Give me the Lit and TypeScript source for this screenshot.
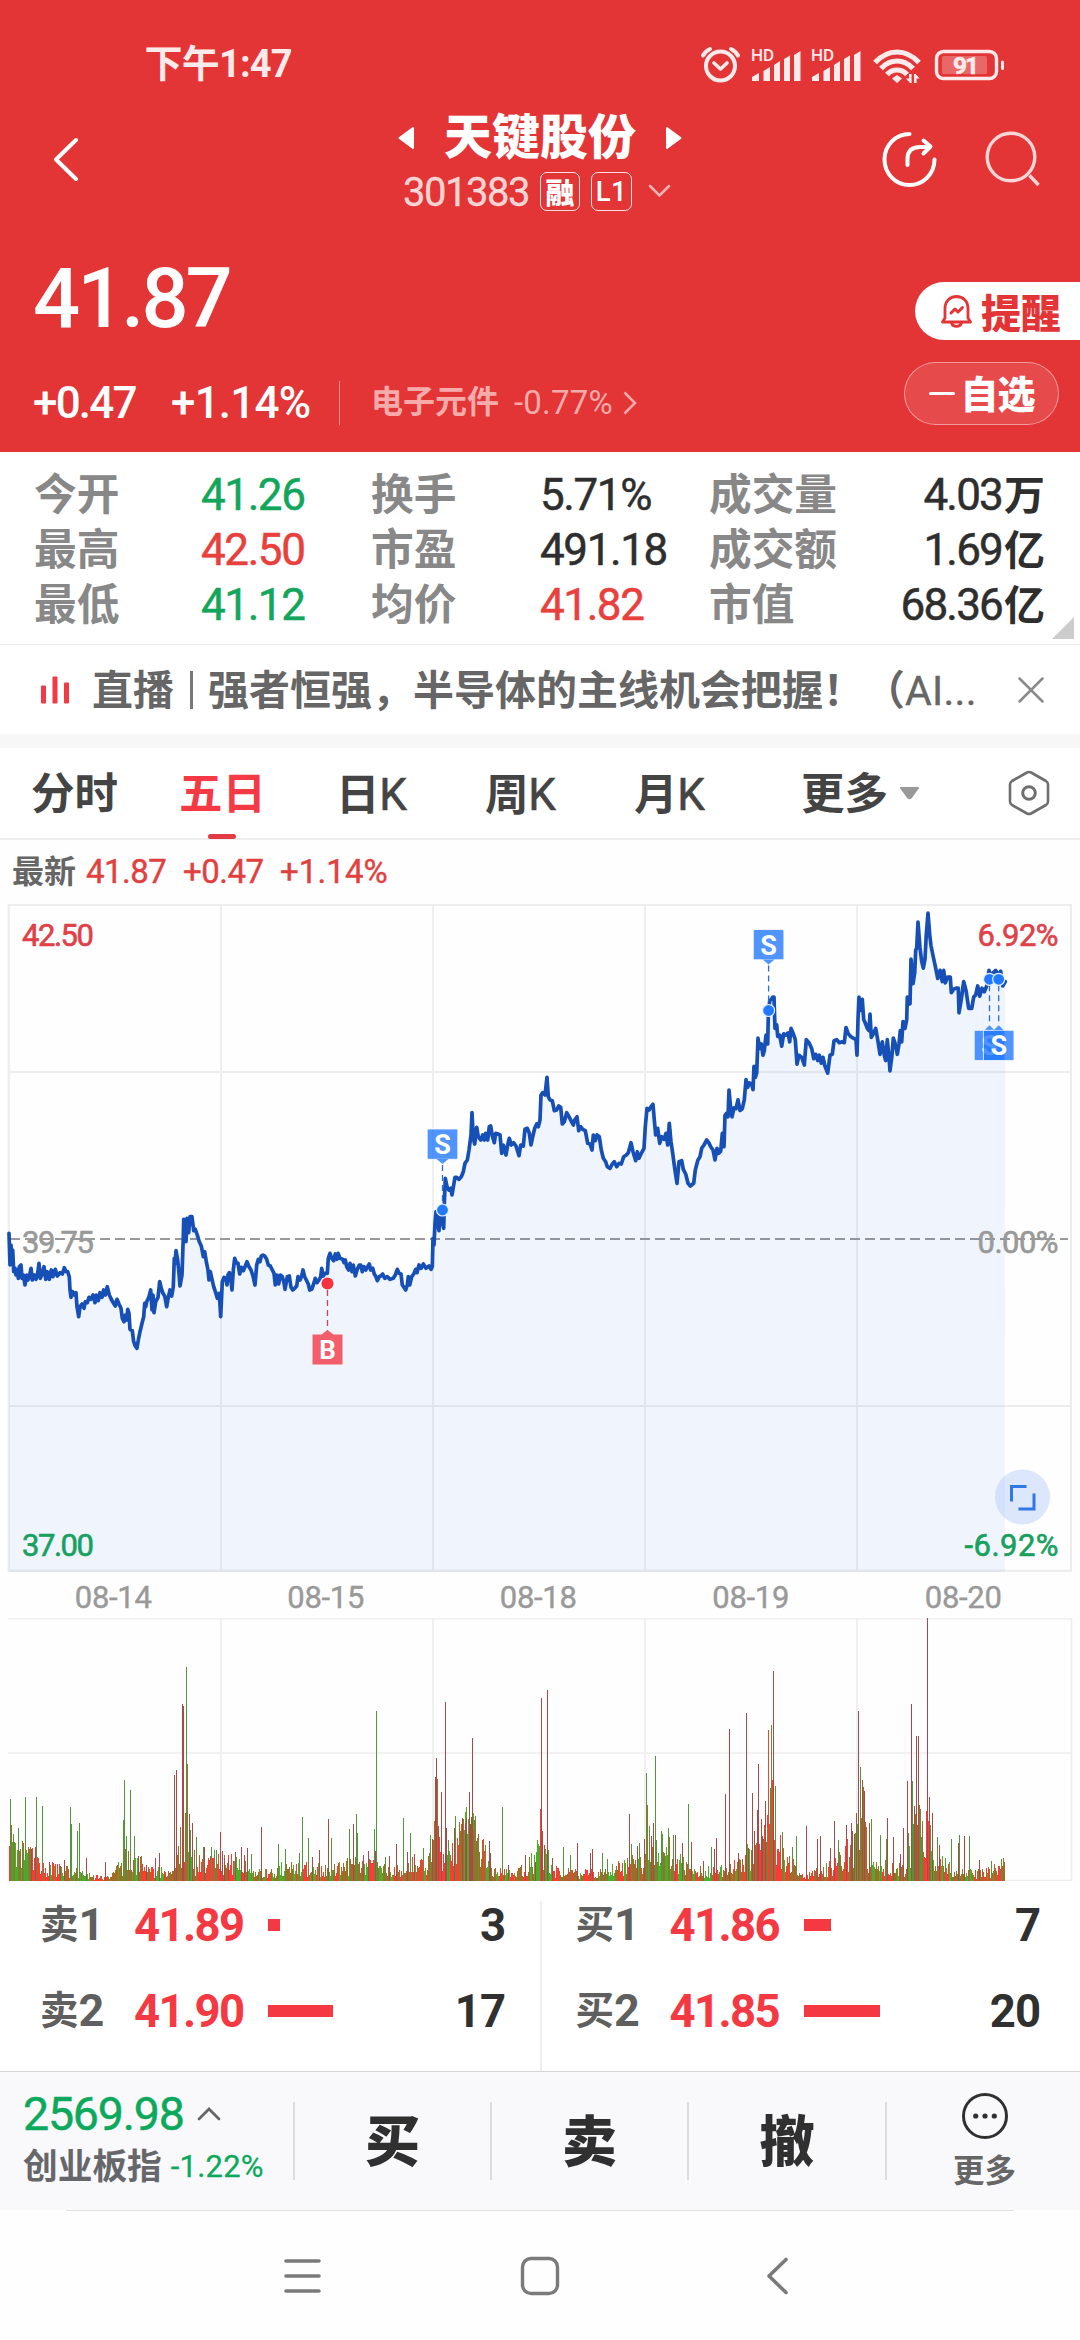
import { LitElement, html, svg, css } from "lit";
import { customElement, property } from "lit/decorators.js";

const base = css`
  :host {
    display: block;
    font-family: Roboto, "Noto Sans CJK SC", sans-serif;
    box-sizing: border-box;
  }
  * { box-sizing: border-box; }
  svg { display: block; flex: none; }
  .cjk { font-weight: 700; }
`;

/* ---------- chart data ---------- */

type Pt = [number, number];

const seg1 = "27,1030 30,1125 33,1065 36,1120 38,1080 41,1145 45,1135 48,1155 52,1140 55,1165 58,1130 63,1125 66,1165 70,1155 75,1185 80,1155 84,1170 89,1155 93,1135 97,1170 103,1155 108,1168 113,1150 117,1120 121,1165 127,1150 132,1130 137,1168 142,1145 148,1168 154,1140 159,1160 166,1138 172,1158 180,1148 187,1152 193,1133 198,1145 203,1145 208,1160 210,1200 213,1222 218,1205 223,1215 228,1208 231,1250 236,1280 240,1250 246,1242 252,1255 256,1235 262,1238 267,1222 272,1228 279,1215 285,1238 289,1215 295,1232 300,1208 306,1222 311,1200 316,1215 322,1190 328,1215 334,1228 340,1238 346,1248 351,1228 357,1242 363,1255 367,1285 372,1295 376,1275 380,1290 383,1258 387,1270 390,1318 397,1322 401,1355 406,1368 411,1375 415,1350 420,1325 426,1300 431,1280 434,1240 437,1250 440,1235 447,1220 452,1200 456,1260 459,1215 462,1268 467,1235 474,1222 479,1175 484,1195 489,1210 494,1218 500,1250 505,1222 510,1200 515,1218 520,1190 523,1105 525,1120 528,1082 533,1110 537,1150 540,1188 546,1155 550,1040 551,988 555,1000 558,1055 561,985 566,1028 570,980 576,980 581,1022 586,1018 592,1035 598,1055 604,1068 610,1100 614,1085 619,1115 624,1140 627,1170 631,1145 636,1168 641,1190 647,1208 652,1225 658,1210 662,1280 667,1175 672,1162 677,1165 681,1185 684,1155 688,1148 692,1165 696,1200 700,1140 704,1105 709,1118 714,1120 719,1152 724,1132 730,1142 735,1130 741,1115 747,1130 753,1140 759,1158 765,1185 770,1125 775,1108 780,1115 784,1098 789,1095 794,1098 800,1108 805,1125 811,1128 817,1140 822,1150 826,1185 831,1155 836,1182 841,1155 847,1160 852,1178 855,1198 862,1160 868,1158 873,1192 878,1200 884,1195 890,1188 894,1160 900,1170 905,1158 909,1140 914,1160 919,1170 925,1182 929,1200 935,1198 940,1185 946,1165 951,1178 957,1170 962,1160 965,1135 970,1158 975,1150 982,1150 985,1105 990,1090 995,1105 1001,1112 1006,1092 1011,1108 1014,1090 1020,1105 1028,1108 1032,1118 1036,1110 1040,1130 1046,1140 1050,1120 1056,1145 1060,1125 1066,1158 1072,1138 1078,1125";
const seg2 = "2,1125 7,1145 12,1130 17,1140 23,1130 28,1122 32,1140 38,1135 43,1152 48,1160 52,1172 58,1160 62,1158 68,1152 74,1165 82,1160 90,1168 100,1165 106,1155 112,1138 117,1150 123,1152 127,1185 132,1192 137,1200 142,1185 145,1160 149,1185 155,1160 161,1152 167,1138 171,1148 177,1125 183,1135 190,1122 198,1135 207,1128 213,1138 217,1130 219,1045 222,1065 225,1000 228,965 231,990 237,1022 240,960 244,985 251,1015 253,940 256,865 261,890 266,900 272,895 276,915 281,885 285,862 290,862 297,868 304,860 310,845 315,820 322,810 327,780 333,735 336,668 340,745 344,762 350,712 355,740 362,750 368,735 373,750 377,730 383,750 388,710 392,708 397,738 403,758 407,730 414,732 420,735 425,790 430,765 438,795 443,765 448,745 454,765 461,758 468,768 477,797 482,765 490,768 495,718 502,715 508,730 513,765 518,740 524,715 530,702 535,710 540,690 543,615 548,608 555,615 561,562 565,620 570,630 577,632 583,662 590,660 596,648 602,652 607,702 613,695 620,668 627,680 633,692 640,705 644,690 651,680 656,722 662,710 668,718 676,722 683,760 690,762 696,780 700,735 706,752 711,735 718,740 724,780 730,805 737,815 742,830 750,835 757,822 763,815 770,830 777,820 784,822 791,800 799,795 805,788 813,758 819,785 827,812 832,785 837,805 844,790 852,775 856,710 861,655 867,660 873,650 879,643 883,690 887,735 893,715 899,760 905,740 912,748 918,730 923,765 928,700 933,755 938,790 944,835 951,880 957,815 965,812 970,838 977,852 984,880 991,888 1001,880 1006,840 1013,812 1020,800 1025,775 1032,765 1040,750 1046,758 1052,770 1059,780 1065,810 1071,775 1076,790";
const seg3 = "2,585 7,545 12,575 15,505 20,500 24,508 27,448 32,490 36,508 42,488 48,490 54,470 60,494 67,490 73,470 78,425 83,442 88,432 95,435 99,447 102,395 106,420 110,410 114,332 119,355 124,345 129,370 133,360 138,325 143,345 145,280 149,248 154,245 158,240 162,240 165,310 170,302 173,328 179,325 185,350 191,322 197,325 204,320 209,340 213,310 220,322 226,335 231,390 237,370 245,375 253,392 259,335 267,342 275,355 281,378 287,368 293,382 298,370 304,388 309,375 315,395 323,410 330,370 337,368 342,338 350,335 358,342 366,340 373,342 378,308 385,322 392,328 400,332 408,335 411,370 414,290 417,240 422,270 427,245 431,290 436,298 442,310 447,315 450,278 454,330 460,322 467,310 473,335 480,368 487,340 493,370 497,382 502,335 507,375 510,405 516,370 520,332 526,345 532,368 537,345 541,315 545,340 549,295 555,310 560,290 562,240 570,255 573,155 579,210 584,185 587,135 590,130 594,72 600,130 605,160 610,175 615,155 619,100 624,52 629,100 633,125 640,150 647,175 653,198 660,180 667,205 671,180 676,208 683,195 691,195 694,230 701,222 708,220 715,220 717,275 724,245 731,205 738,225 746,265 755,265 761,240 767,235 773,215 779,238 786,220 793,228 800,215 807,180 813,195 820,185 827,180 835,190 842,182 848,215 856,205";

const parse = (s: string, ox: number, ky: number): Pt[] =>
  s.split(" ").map((p) => {
    const [a, b] = p.split(",").map(Number);
    return [ox + a / 3, b / ky - 14];
  });

const price: Pt[] = [...parse(seg1, 0, 3), ...parse(seg2, 360, 3), ...parse(seg3, 720, 2.24)];
const linePath = "M" + price.map(([x, y]) => `${x.toFixed(1)} ${y.toFixed(1)}`).join("L");
const areaPath = `${linePath}L1005 668L9 668Z`;

/* Volume spikes: x, top, colour (r = up, g = down, b = mixed). */
const leftSpikes = "30,867,g 32,945,b 39,972,g 42,995,b 53,954,g 68,1011,g 73,861,g 83,1029,g 91,1017,r 103,1011,r 106,861,g 123,888,g 143,1056,r 175,1068,r 188,1050,r 204,891,g 207,942,g 225,963,g 230,939,g 251,1044,r 306,1056,r 358,930,g 361,810,g 367,978,g 378,840,g 390,978,g 402,1038,r 425,1065,r 451,1044,r 463,1029,r 506,795,r 512,780,r 531,582,r 534,588,r 538,909,b 541,471,g 544,762,b 550,912,r 553,960,g 559,939,r 570,981,g 590,1011,g 594,1011,r 614,1011,g 622,1020,g 630,1020,g 640,966,r 646,1023,r 652,1044,r 665,1044,r 683,1026,r 701,1011,r 709,1035,r 718,1014,r 730,1032,g 759,951,r 808,1002,g 828,1017,g 869,1029,g 878,921,g 895,984,g 907,1041,r 927,1020,r 953,927,r 962,984,g 1014,957,g 1026,942,r 1035,912,g 1038,969,g 1055,1035,r 1070,1023,r 1087,957,g 1090,1023,r 1093,603,g 1119,1041,g 1131,1038,r 1151,1002,r 1171,924,g 1183,1026,r 1191,969,g 1203,1032,r 1229,1014,g 1249,975,g 1255,987,r 1261,933,b 1264,801,r 1267,744,r 1270,807,b 1273,948,r 1281,846,r 1293,576,r 1296,954,r 1302,990,g 1320,954,r 1322,918,g 1342,924,r 1351,939,r 1354,924,r 1363,846,r 1366,942,r 1369,921,r 1372,684,r 1375,960,b 1380,918,g 1389,990,g 1409,1005,g 1421,993,r 1424,1029,r 1459,891,g 1476,1065,r 1525,1035,r 1554,1056,r";
const rightSpikes = "1,897,R 4,564,r 7,963,r 13,1005,r 21,540,r 24,1020,g 36,1044,r 68,1011,g 88,1035,g 108,999,r 146,1029,r 152,1017,r 181,1029,g 195,1047,g 259,912,r 267,1002,g 283,1008,r 288,999,g 303,987,r 309,789,g 312,885,b 318,948,g 323,978,r 329,939,r 335,738,g 338,990,g 352,963,g 355,972,g 373,954,g 376,981,b 387,975,g 393,975,r 413,999,r 431,882,g 439,996,r 474,1053,r 497,1011,g 506,1017,r 512,984,r 538,852,r 550,657,r 575,1029,r 599,609,r 605,1014,r 617,849,r 622,963,r 631,900,r 634,762,r 643,927,r 646,978,r 652,945,R 655,873,r 657,996,b 660,951,g 663,663,R 665,660,R 669,834,b 672,645,g 675,810,R 678,483,r 681,990,R 683,828,g 704,966,g 707,1014,b 734,1011,g 746,978,g 775,948,r 805,987,r 816,978,r 843,1014,r 855,933,r 866,990,g 890,945,r 904,939,r 907,963,r 913,972,r 919,909,r 924,681,R 926,603,r 930,771,g 933,924,b 936,810,r 939,831,b 942,843,r 945,936,b 956,939,r 962,927,g 988,975,g 1005,987,g 1008,924,r 1026,981,r 1046,1032,r 1055,954,r 1067,813,r 1069,969,g 1078,582,r 1081,813,g 1084,942,g 1087,888,r 1090,912,b 1093,678,r 1096,945,b 1099,678,r 1101,885,b 1104,897,g 1107,981,g 1122,903,R 1125,324,r 1128,933,R 1130,861,r 1133,945,g 1139,909,r 1154,981,g 1159,1005,r 1177,1044,g 1194,987,g 1215,999,r 1218,975,g 1232,978,r 1247,978,g 1275,1050,r 1312,1053,g 1340,1047,g 1344,1068,b";
const envelope: Pt[] = [[8, 110], [20, 95], [38, 75], [50, 45], [65, 45], [90, 18], [110, 12], [125, 80], [140, 65], [148, 40], [172, 26], [182, 160], [190, 110], [195, 65], [215, 65], [240, 65], [252, 25], [275, 40], [290, 50], [310, 45], [330, 38], [350, 60], [362, 60], [376, 52], [400, 36], [415, 60], [428, 65], [438, 130], [448, 60], [460, 190], [478, 150], [490, 36], [515, 26], [530, 60], [541, 130], [550, 38], [575, 28], [600, 28], [630, 65], [642, 70], [655, 90], [675, 80], [690, 35], [720, 38], [740, 65], [758, 140], [772, 190], [785, 70], [810, 22], [830, 50], [850, 110], [862, 190], [872, 45], [885, 60], [905, 45], [918, 190], [926, 130], [940, 70], [952, 36], [965, 26], [985, 32], [1004, 55]];

const buildVolume = () => {
  const d: Record<string, string> = { r: "", g: "", b: "", B: "", R: "", G: "" };
  let seed = 20;
  const rnd = () => ((seed = (seed * 1103515245 + 12345) % 2147483648) / 2147483648);
  let k = 0;
  let run = "R";
  let left = 0;
  for (let x = 9; x < 1005; x++) {
    while (k < envelope.length - 2 && envelope[k + 1][0] < x) k++;
    const [x0, a] = envelope[k];
    const [x1, b] = envelope[k + 1];
    const env = a + ((b - a) * (x - x0)) / (x1 - x0);
    if (left-- <= 0) {
      const q = rnd();
      run = q < 0.32 ? "R" : q < 0.58 ? "G" : "B";
      left = Math.floor(rnd() * 4);
    }
    const h = Math.max(1.5, (env / 2.3) * (0.18 + 0.82 * rnd()));
    d[run] += `M${x + 0.5} 263V${(263 - h).toFixed(1)}`;
  }
  for (const [list, ox] of [[leftSpikes, 0], [rightSpikes, 540]] as [string, number][]) {
    for (const item of list.split(" ")) {
      const [x, y, c] = item.split(",");
      const px = Math.floor(ox + Number(x) / 2.904) + 0.5;
      d[c] += `M${px} 263V${((Number(y) - 324) / 3).toFixed(1)}`;
    }
  }
  return d;
};
const volume = buildVolume();

/* ---------- elements ---------- */

@customElement("status-bar")
class StatusBar extends LitElement {
  static styles = [base, css`
    .bar { height: 106px; padding: 23px 76px 0 144.5px; display: flex; align-items: center; justify-content: space-between; color: #fdeaea; }
    .time { font-size: 38px; font-weight: 700; line-height: 83px; letter-spacing: -0.8px; }
    text { font-family: Roboto, sans-serif; font-weight: 700; }
  `];
  private signal(x: number) {
    return svg`<g transform="translate(${x} 0)">
      <text x="0" y="20" font-size="17" style="font-weight:500" textLength="23">HD</text>
      <path d="M1 40v-4l7-4v8zM12.500 40v-10l6.500-4v14zM23 40v-16l6-4v20zM33 40v-22l6-3.500v25.500zM43 40v-26l6.500-4v30z"/>
    </g>`;
  }
  render() {
    return html`<div class="bar">
      <span class="time">下午1:47</span>
      <svg width="304" height="48" viewBox="700 40 304 48" fill="#fdeaea">
        <g fill="none" stroke="#fdeaea" stroke-width="4" stroke-linecap="round">
          <circle cx="720.500" cy="65" r="14.500"/>
          <path d="M714 62l6.500 6 6.500-6" stroke-linejoin="round" stroke-width="3.600"/>
          <path d="M703 54.500q2-4 7-6.500M738 54.500q-2-4-7-6.500"/>
        </g>
        <g transform="translate(0 40)">${this.signal(751)}${this.signal(811)}</g>
        <g fill="none" stroke="#fdeaea" stroke-width="5.200">
          <path d="M875 61.500Q885 51 897 51T919 61.500"/>
          <path d="M881 67.500Q888 60 897 60T913 67.500"/>
          <path d="M887 73.500Q891 69 897 69T907 73.500"/>
        </g>
        <path d="M897 74l5 3.500-5 4.500-5-4.500z"/>
        <path d="M909 73h2.600v9h-1.600l-4-4.500h3zM914 82h2.600v-4.500h3l-4-4.500h-1.600z"/>
        <rect x="936.500" y="50.500" width="60" height="27" rx="7" fill="none" stroke="#fdeaea" stroke-width="3.400"/>
        <rect x="942" y="55" width="45" height="18" rx="1.500" opacity=".28"/>
        <rect x="1001" y="59.500" width="3" height="9.500" rx="1.500"/>
        <text x="966" y="73" font-size="24.500" text-anchor="middle" textLength="26" stroke="#fdeaea" stroke-width=".6">91</text>
      </svg>
    </div>`;
  }
}

@customElement("title-bar")
class TitleBar extends LitElement {
  static styles = [base, css`
    .bar { height: 107px; display: grid; grid-template-columns: 398px 284px 1fr; color: #fff; }
    .back { padding: 30px 0 0 52px; }
    .mid { padding-top: 8px; }
    .name { display: flex; align-items: center; justify-content: space-between; height: 48px; font-size: 48px; line-height: 48px; font-weight: 900; }
    .sub { display: flex; align-items: center; height: 40px; margin: 9px 0 0 5px; color: rgba(255,255,255,.78); }
    .code { font-size: 40px; width: 137px; letter-spacing: -1.500px; height: 40px; line-height: 44px; -webkit-text-stroke: .3px currentColor; }
    .tag { height: 39px; border: 1.5px solid rgba(255,255,255,.85); border-radius: 7px; color: #fff; display: flex; align-items: center; justify-content: center; }
    .t1 { width: 40px; font-size: 29px; font-weight: 900; }
    .t2 { width: 41px; font-size: 27.500px; font-weight: 500; margin-left: 11px; letter-spacing: .5px; }
    .chev { margin-left: 16px; }
    .tools { display: flex; padding: 23px 0 0 198px; gap: 46px; }
  `];
  render() {
    return html`<div class="bar">
      <svg class="back" width="82" height="77" viewBox="52 136 30 47" fill="none" stroke="#fff" stroke-width="4" stroke-linecap="round" stroke-linejoin="round"><path d="M76 140L56 159.500L76 179"/></svg>
      <div class="mid">
        <div class="name">
          <svg width="16" height="24" viewBox="0 0 16 24" fill="#fff" stroke="#fff" stroke-width="2" stroke-linejoin="round"><path d="M15 2v20L1.500 12z"/></svg>
          <span>天键股份</span>
          <svg width="16" height="24" viewBox="0 0 16 24" fill="#fff" stroke="#fff" stroke-width="2" stroke-linejoin="round"><path d="M1 2v20L14.500 12z"/></svg>
        </div>
        <div class="sub">
          <span class="code">301383</span><span class="tag t1">融</span><span class="tag t2">L1</span>
          <svg class="chev" width="23" height="14" viewBox="0 0 23 14" fill="none" stroke="#f5b4b4" stroke-width="2.500" stroke-linecap="round"><path d="M2 2l9.500 9.500L21 2"/></svg>
        </div>
      </div>
      <div class="tools">
        <svg width="58" height="60" viewBox="880 129 58 60" fill="none" stroke="#fff" stroke-width="4" stroke-linecap="round" stroke-linejoin="round">
          <path d="M909.500 134A25 25.500 0 1 0 934.500 159.500" />
          <path d="M907.500 165v-6Q907.500 147 920 147h9.500M923.500 140.500l7 6-7 7"/>
        </svg>
        <svg width="58" height="60" viewBox="984 129 58 60" fill="none" stroke="#fcd6d6" stroke-width="3.400">
          <circle cx="1011" cy="157" r="23.800"/><path d="M1029.500 175.500l9 9.500"/>
        </svg>
      </div>
    </div>`;
  }
}

@customElement("quote-head")
class QuoteHead extends LitElement {
  static styles = [base, css`
    .wrap { height: 239px; display: flex; justify-content: space-between; color: #fff; }
    .left { padding: 46px 0 0 33px; }
    .price { font-size: 83px; line-height: 80px; font-weight: 500; letter-spacing: -3px; }
    .row { display: grid; grid-template-columns: 138px 168px 32px 143px auto auto; align-items: center; height: 44px; line-height: 44px; margin-top: 42px; font-size: 44px; font-weight: 500; letter-spacing: -1.800px; }
    .pct { letter-spacing: -.8px; }
    .div { width: 1px; height: 44px; background: rgba(255,255,255,.45); }
    .sector { color: #f6abab; font-size: 32px; font-weight: 700; letter-spacing: 0; height: 44px; line-height: 42px; }
    .spct { color: #f6abab; font-size: 33px; font-weight: 400; letter-spacing: .2px; margin-right: 10px; }
    .right { display: flex; flex-direction: column; align-items: flex-end; padding-top: 69px; }
    .pill { display: flex; align-items: center; }
    .remind { width: 165px; height: 58px; border-radius: 29px 0 0 29px; background: #fff; color: #e33536; font-size: 40px; font-weight: 900; padding: 0 0 1px 25px; letter-spacing: -.3px; }
    .remind span { margin-left: 8px; }
    .watch { width: 155px; height: 63px; margin: 22px 21.500px 0 0; border-radius: 32px; background: #e64a4b; border: 1.5px solid rgba(255,255,255,.45); font-size: 38px; font-weight: 900; padding: 0 0 4px 24px; letter-spacing: -1px; }
    .watch i { width: 26px; height: 3px; border-radius: 2px; background: #fff; margin: 3px 6px 0 0; }
  `];
  render() {
    return html`<div class="wrap">
      <div class="left">
        <div class="price">41.87</div>
        <div class="row">
          <span>+0.47</span><span class="pct">+1.14%</span><span class="div"></span>
          <span class="sector">电子元件</span><span class="spct">-0.77%</span>
          <svg width="14" height="24" viewBox="0 0 14 24" fill="none" stroke="#f6abab" stroke-width="2.500"><path d="M1.500 1.500L12 12 1.500 22.500"/></svg>
        </div>
      </div>
      <div class="right">
        <div class="pill remind">
          <svg width="33" height="34" viewBox="0 0 33 34" fill="none" stroke="#e33536" stroke-width="2.800" stroke-linejoin="round" stroke-linecap="round">
            <path d="M5 24V14.500C5 7 10 2.500 16.500 2.500S28 7 28 14.500V24l2.500 4h-28z"/><path d="M11.500 29c1.500 4.500 8.500 4.500 10 0"/><path d="M11 19l4-4 3 3 4.500-4.500" stroke-width="3"/>
          </svg><span>提醒</span>
        </div>
        <div class="pill watch"><i></i>自选</div>
      </div>
    </div>`;
  }
}

@customElement("stat-grid")
class StatGrid extends LitElement {
  static styles = [base, css`
    .grid { position: relative; height: 193px; padding: 16px 35px 0 34px; display: grid; grid-template-columns: 167px 170px 169px 169px 130px 1fr; grid-auto-rows: 55px; align-items: center; border-bottom: 1px solid #eaeaea; background: #fff; }
    .l { font-size: 42.700px; line-height: 55px; font-weight: 700; color: #888; }
    .v { font-size: 44px; line-height: 55px; color: #2e2e2e; letter-spacing: -1.4px; white-space: nowrap; -webkit-text-stroke: .5px currentColor; }
    .end { text-align: right; letter-spacing: -1.800px; }
    .u { font-size: 41px; font-weight: 700; letter-spacing: 0; margin-left: 2px; -webkit-text-stroke: 0; }
    .up { color: #e8403c; } .down { color: #12a65c; }
    .corner { position: absolute; right: 6px; bottom: 5px; }
  `];
  render() {
    const cells: [string, string, string, string?][] = [
      ["今开", "41.26", "down"], ["换手", "5.71%", ""], ["成交量", "4.03", "end", "万"],
      ["最高", "42.50", "up"], ["市盈", "491.18", ""], ["成交额", "1.69", "end", "亿"],
      ["最低", "41.12", "down"], ["均价", "41.82", "up"], ["市值", "68.36", "end", "亿"],
    ];
    return html`<div class="grid">
      ${cells.map(([l, v, c, u]) => html`<span class="l">${l}</span><span class="v ${c}">${v}${u ? html`<span class="u">${u}</span>` : ""}</span>`)}
      <svg class="corner" width="22" height="22" viewBox="0 0 22 22" fill="#ccc"><path d="M22 0v22H0z"/></svg>
    </div>`;
  }
}

@customElement("news-strip")
class NewsStrip extends LitElement {
  static styles = [base, css`
    .strip { height: 103px; border-bottom: 14px solid #f7f7f7; display: flex; align-items: center; padding: 1px 36px 0 41px; background: #fff; }
    .t { margin-left: 22px; font-size: 41px; font-weight: 700; color: #666; white-space: nowrap; width: 910px; height: 88px; line-height: 91px; display: flex; }
    .bar { margin: 0 15.500px; font-weight: 400; width: 3px; height: 38px; align-self: center; background: #777; }
    .lat { font-weight: 400; letter-spacing: .3px; -webkit-text-stroke: .4px currentColor; }
    .x { margin-left: auto; }
  `];
  render() {
    return html`<div class="strip">
      <svg width="29" height="28" viewBox="0 0 29 28" fill="#f03a44"><rect y="9.500" width="5" height="18" rx="1"/><rect x="11.500" y=".5" width="5" height="27" rx="1"/><rect x="23" y="6.500" width="5" height="21" rx="1"/></svg>
      <div class="t"><span>直播</span><span class="bar"></span><span>强者恒强，半导体的主线机会把握！（</span><span class="lat">AI...</span></div>
      <svg class="x" width="26" height="26" viewBox="0 0 26 26" stroke="#8a8a8a" stroke-width="2.500" stroke-linecap="round"><path d="M1.500 1.500l23 23M24.500 1.500l-23 23"/></svg>
    </div>`;
  }
}

@customElement("period-tabs")
class PeriodTabs extends LitElement {
  static styles = [base, css`
    .tabs { height: 92px; display: grid; grid-template-columns: 148px 157px 149px 149px 167px 98px 108px 1fr; padding-left: 31px; align-items: center; border-bottom: 2px solid #eee; color: #444; background: #fff; }
    .tab { position: relative; font-size: 43.500px; line-height: 90px; padding-top: 2px; height: 90px; font-weight: 700; white-space: nowrap; }
    .k { font-weight: 400; font-size: 44px; -webkit-text-stroke: .6px currentColor; margin-left: -.3px; }
    .on { color: #f53a45; }
    .on::after { content: ""; position: absolute; left: 28.500px; bottom: -1px; width: 28px; height: 5px; border-radius: 3px; background: #e33b44; }
  `];
  render() {
    const k = (s: string) => html`<span class="tab">${s}<span class="k">K</span></span>`;
    return html`<div class="tabs">
      <span class="tab">分时</span><span class="tab on">五日</span>${k("日")}${k("周")}${k("月")}<span class="tab">更多</span>
      <svg width="21" height="14" viewBox="0 0 21 14" fill="#999"><path d="M1.500 1h18q1 .5 .3 1.500l-7.300 10q-2 1.500-4 0l-7.300-10q-.7-1 .3-1.500z"/></svg>
      <svg width="44" height="48" viewBox="0 0 44 48" fill="none" stroke="#6e6e6e" stroke-width="2.600" stroke-linejoin="round"><path d="M20 3.500q2-1 4 0l15 8.500q2 1.200 2 3.500v17q0 2.300-2 3.500l-15 8.500q-2 1-4 0l-15-8.500q-2-1.200-2-3.500v-17q0-2.300 2-3.500z"/><circle cx="22" cy="24" r="6.300" stroke-width="3"/></svg>
    </div>`;
  }
}

@customElement("price-chart")
class PriceChart extends LitElement {
  static styles = [base, css`
    .info { height: 64px; display: flex; align-items: center; padding-left: 12px; font-size: 33px; line-height: 66px; color: #e0413f; letter-spacing: -.5px; -webkit-text-stroke: .4px currentColor; }
    .info .cjk { color: #666; font-size: 32px; letter-spacing: 0; margin-right: 10px; height: 64px; line-height: 64px; -webkit-text-stroke: 0; }
    .info .n { width: 97px; }
    .info .p { letter-spacing: .1px; }
    text { font-family: Roboto, sans-serif; font-size: 31px; }
    .axis { font-weight: 400; stroke-width: .6px; }
    .mark { font-family: Roboto, sans-serif; font-weight: 700; font-size: 27px; fill: #fff; text-anchor: middle; }
    .dates { height: 46px; display: grid; grid-template-columns: repeat(5, 212.5px); padding-left: 7px; text-align: center; font-size: 31px; line-height: 51px; color: #999; letter-spacing: -.3px; -webkit-text-stroke: .4px currentColor; }
  `];
  private axis(x: number, y: number, color: string, len: number, label: string, end = false) {
    return svg`<text class="axis" x="${x}" y="${y}" fill="${color}" stroke="${color}" text-anchor="${end ? "end" : "start"}" textLength="${len}">${label}</text>`;
  }
  private sell(x: number, dot: number, box: number, below: boolean) {
    const tail = below ? `M${x - 5} ${box}L${x} ${box - 5}L${x + 5} ${box}Z` : `M${x - 6} ${box + 30}L${x} ${box + 35}L${x + 6} ${box + 30}Z`;
    return svg`
      <path d="M${x} ${below ? dot + 6 : box + 36}V${below ? box - 5 : dot - 6}" stroke="#2a6fd0" stroke-width="1.300" stroke-dasharray="6 4"/>
      <rect x="${x - 15.3}" y="${box}" width="30.600" height="30.300" rx="1.500" fill="#1f77ff" fill-opacity=".78" stroke="#fff" stroke-opacity=".8" stroke-width="1"/>
      <path d="${tail}" fill="#1f77ff" fill-opacity=".78"/>
      <text class="mark" x="${x}" y="${box + 25}">S</text>
      <circle cx="${x}" cy="${dot}" r="6" fill="#2179ff" stroke="#e8f0ff" stroke-width="1.200"/>`;
  }
  render() {
    return html`
      <div class="info"><span class="cjk">最新</span><span class="n">41.87</span><span class="n">+0.47</span><span class="p">+1.14%</span></div>
      <svg width="1080" height="668" viewBox="0 0 1080 668">
        <g stroke="#ededed" stroke-width="1.800" fill="none">
          <path d="M221 0V667M433 0V667M645 0V667M857 0V667M9 168H1071M9 502H1071"/>
          <rect x="8.700" y=".8" width="1062.300" height="666" stroke-width="2.200"/>
        </g>
        <path d="M10 335H1068" stroke="#999" stroke-width="1.800" stroke-dasharray="10 5"/>
        <path d=${areaPath} fill="#2068f0" fill-opacity=".066"/>
        <path d=${linePath} fill="none" stroke="#164fb5" stroke-width="3.700" stroke-linejoin="round" stroke-linecap="round"/>
        ${this.axis(22, 42, "#e04048", 72, "42.50")}
        ${this.axis(22, 348.7, "#999", 72, "39.75")}
        ${this.axis(22, 651.5, "#16a15f", 72, "37.00")}
        ${this.axis(1058.5, 42, "#e04048", 81, "6.92%", true)}
        ${this.axis(1058.5, 348.7, "#999", 81, "0.00%", true)}
        <circle cx="1022.500" cy="593" r="27.500" fill="#a9c5fb" fill-opacity=".4"/>
        <path d="M1011.500 597.500V582.500H1026.500M1034 589.500V605H1018.500" fill="none" stroke="#2f79e4" stroke-width="3"/>
        ${this.axis(1058.5, 651.5, "#16a15f", 94, "-6.92%", true)}
        ${this.sell(442.5, 306, 225, false)}
        ${this.sell(768.6, 106.5, 25.5, false)}
        ${this.sell(989.5, 75.3, 126.3, true)}
        ${this.sell(998.7, 75.3, 126.3, true)}
        <path d="M327.500 386V427" stroke="#d04450" stroke-width="1.300" stroke-dasharray="6 4"/>
        <path d="M312.500 430.500h9l6-4.500 6 4.500h9v30h-30z" fill="#f25f6a"/>
        <text class="mark" x="327.500" y="455" style="font-size:26px">B</text>
        <circle cx="327.500" cy="379.500" r="6" fill="#f5333f"/>
      </svg>
      <div class="dates">${["08-14", "08-15", "08-18", "08-19", "08-20"].map((d) => html`<span>${d}</span>`)}</div>
      <svg width="1080" height="263" viewBox="0 0 1080 263">
        <path d="M8 .8H1072M8 135H1072" stroke="#f2f2f2" stroke-width="1.800"/>
        <path d="M221 0V263M433 0V263M645 0V263M857 0V263M1071.500 0V263M8 262.500H1072" stroke="#ededed" stroke-width="1.600"/>
        <g fill="none" stroke-width="1" shape-rendering="crispEdges">
          <path d=${volume.B} stroke="#a06d28"/><path d=${volume.G} stroke="#4cad29"/><path d=${volume.R} stroke="#ff3933"/>
          <path d=${volume.r} stroke="#a84a48"/><path d=${volume.g} stroke="#52963b"/>
          <path d=${volume.b} stroke="#a06d28"/>
        </g>
      </svg>`;
  }
}

@customElement("order-side")
class OrderSide extends LitElement {
  @property() name = "";
  @property({ attribute: false }) rows: [string, number, string][] = [];
  static styles = [base, css`
    :host { flex: 1; }
    .row { height: 86px; display: grid; grid-template-columns: 94px 134px 1fr auto; align-items: center; font-weight: 700; }
    .n { color: #5f5f5f; font-size: 45px; letter-spacing: -1px; white-space: nowrap; display: flex; align-items: center; line-height: 60px; }
    .c { font-size: 38.500px; font-weight: 700; letter-spacing: 0; height: 60px; line-height: 59px; }
    .p { color: #f53943; font-size: 45.500px; letter-spacing: -1.600px; }
    .b { height: 12px; background: #f53943; }
    .q { color: #303030; font-size: 45.500px; letter-spacing: -1px; }
  `];
  render() {
    return html`${this.rows.map(([p, w, q], i) => html`<div class="row">
      <span class="n"><span class="c">${this.name}</span>${i + 1}</span><span class="p">${p}</span>
      <span class="b" style="width:${w}px"></span><span class="q">${q}</span></div>`)}`;
  }
}

@customElement("trade-bar")
class TradeBar extends LitElement {
  static styles = [base, css`
    .bar { height: 139px; border-top: 1.5px solid #d4d4d4; background: #f9f9fc; display: grid; grid-template-columns: 293px 197px 197px 198px 1fr; align-items: center; }
    .idx { padding-left: 23px; height: 137px; }
    .l1 { display: flex; align-items: center; gap: 13px; height: 50px; margin-top: 16px; font-size: 46.500px; letter-spacing: -1.200px; color: #0ca95c; -webkit-text-stroke: .5px currentColor; }
    .l2 { display: flex; align-items: center; height: 40px; line-height: 42px; margin-top: 8px; color: #0ca95c; font-size: 31px; letter-spacing: .200px; -webkit-text-stroke: .3px currentColor; }
    .l2 .cjk { font-size: 34.700px; color: #66676b; margin-right: 9px; letter-spacing: 0; height: 40px; line-height: 40px; -webkit-text-stroke: 0; }
    .a { height: 78px; line-height: 80px; border-left: 2px solid #dcdcde; text-align: center; font-size: 55px; font-weight: 900; color: #303030; }
    .more { border-left: 2px solid #dcdcde; height: 78px; display: flex; flex-direction: column; align-items: center; justify-content: center; font-size: 31.500px; font-weight: 700; color: #666; gap: 12px; line-height: 40px; padding: 1px 0 0 2px; }
    .line { height: 1px; margin: 0 66px; background: #e2e2e2; }
  `];
  render() {
    return html`<div class="bar">
      <div class="idx">
        <div class="l1">2569.98<svg width="24" height="14" viewBox="0 0 24 14" fill="none" stroke="#666" stroke-width="2.800" stroke-linecap="round"><path d="M2 12L12 2l10 10"/></svg></div>
        <div class="l2"><span class="cjk">创业板指</span>-1.22%</div>
      </div>
      <div class="a">买</div><div class="a">卖</div><div class="a">撤</div>
      <div class="more">
        <svg width="48" height="48" viewBox="0 0 48 48"><circle cx="24" cy="24" r="21.500" fill="none" stroke="#303030" stroke-width="3"/><g fill="#303030"><circle cx="14.700" cy="24" r="2.600"/><circle cx="24" cy="24" r="2.600"/><circle cx="33.300" cy="24" r="2.600"/></g></svg>
        <span>更多</span>
      </div>
    </div><div class="line"></div>`;
  }
}

@customElement("app-root")
class AppRoot extends LitElement {
  static styles = [base, css`
    :host { width: 1080px; height: 2340px; background: #fefefe; overflow: hidden; }
    .page { display: flex; flex-direction: column; height: 2340px; }
    .head { background: #e33536; height: 452px; }
    .book { display: flex; height: 190px; padding: 1px 40px 0; background: #fff; }
    .sell { padding-right: 35px; flex: none; width: 500px; }
    .mid { width: 1.5px; background: #eee; margin: 19px 0 0; }
    .buy { padding-left: 34px; }
    .nav { flex: 1; display: flex; justify-content: center; padding-top: 43px; gap: 198px; background: #fefefe; }
  `];
  render() {
    return html`<div class="page">
      <div class="head"><status-bar></status-bar><title-bar></title-bar><quote-head></quote-head></div>
      <stat-grid></stat-grid>
      <news-strip></news-strip>
      <period-tabs></period-tabs>
      <price-chart></price-chart>
      <div class="book">
        <order-side class="sell" name="卖" .rows=${[["41.89", 12, "3"], ["41.90", 65, "17"]]}></order-side>
        <div class="mid"></div>
        <order-side class="buy" name="买" .rows=${[["41.86", 27, "7"], ["41.85", 76, "20"]]}></order-side>
      </div>
      <trade-bar></trade-bar>
      <div class="nav">
        <svg width="40" height="44" viewBox="0 0 40 44" stroke="#7a7a7a" stroke-width="3.600" stroke-linecap="round"><path d="M4 7h33M4 22h33M4 37h33"/></svg>
        <svg width="40" height="44" viewBox="0 0 40 44" fill="none" stroke="#7a7a7a" stroke-width="3.400"><rect x="2.500" y="4.500" width="35" height="35" rx="8.500"/></svg>
        <svg width="40" height="44" viewBox="0 0 40 44" fill="none" stroke="#7a7a7a" stroke-width="3.600" stroke-linecap="round" stroke-linejoin="round"><path d="M28 5.500L11 22l17 16.500"/></svg>
      </div>
    </div>`;
  }
}
